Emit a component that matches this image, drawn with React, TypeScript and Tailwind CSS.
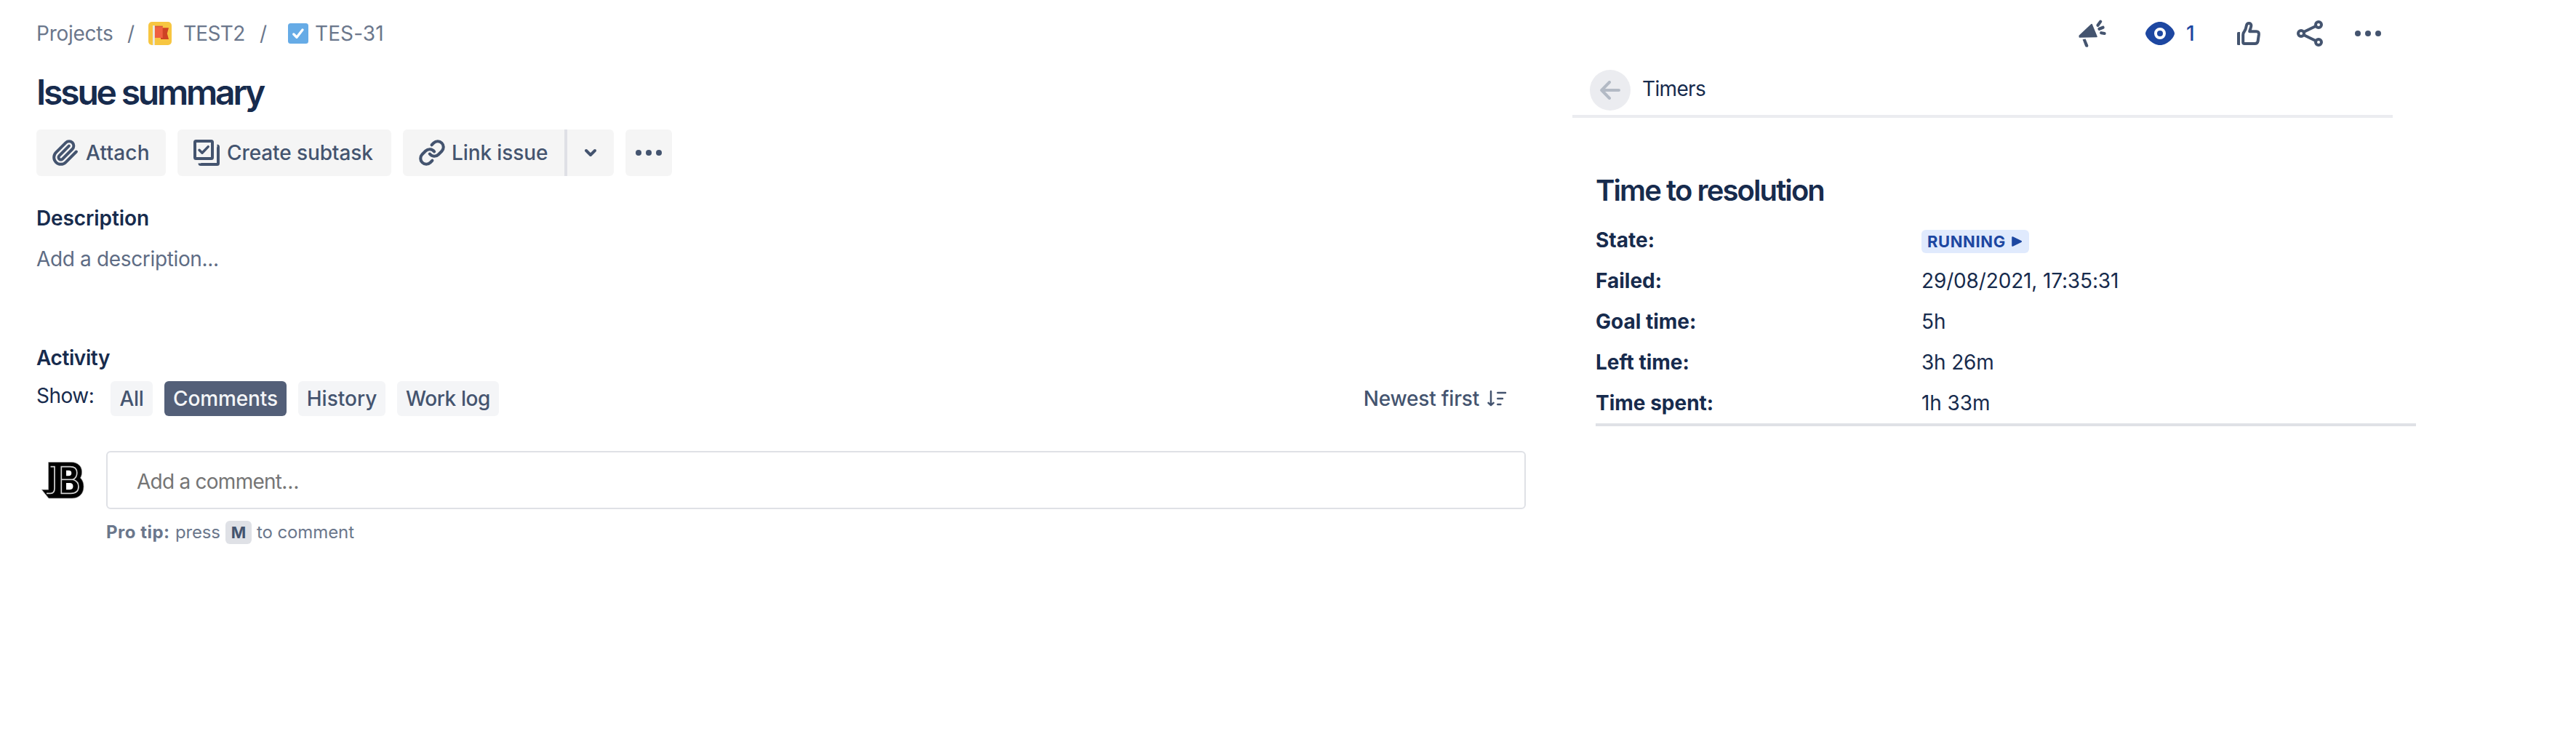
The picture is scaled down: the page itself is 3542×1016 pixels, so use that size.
import type { ReactNode } from "react";

function FlagIcon() {
  return (
    <svg viewBox="0 0 32 32" className="ml-[20px] h-8 w-8 shrink-0">
      <rect width="32" height="32" rx="5" fill="#f7c641" />
      <path d="M17 8.3H28L25.8 16L28 24H17Z" fill="#ce4324" />
      <rect x="8.7" y="6" width="11" height="16" fill="#ef6040" />
      <rect x="8.7" y="5.6" width="11" height="1.6" fill="#d3573a" />
      <rect x="6" y="5" width="2.8" height="27" fill="#e9ebe6" />
    </svg>
  );
}

function TaskIcon() {
  return (
    <svg viewBox="0 0 28 28" className="ml-[30px] h-7 w-7 shrink-0">
      <rect width="28" height="28" rx="3.5" fill="#66abe6" />
      <path d="M7.8 15L12 19.3L20 9" fill="none" stroke="#fff" strokeWidth="3.4" strokeLinecap="round" strokeLinejoin="round" />
    </svg>
  );
}

function PaperclipIcon() {
  return (
    <svg viewBox="0 0 24 24" className="h-[38px] w-[38px] shrink-0" fill="none" stroke="currentColor" strokeWidth="2.5" strokeLinecap="round">
      <path d="m21.44 11.05-9.19 9.19a6 6 0 0 1-8.49-8.49l8.57-8.57A4 4 0 1 1 18 8.84l-8.59 8.57a2 2 0 0 1-2.83-2.83l8.49-8.48" />
    </svg>
  );
}

function SubtaskIcon() {
  return (
    <svg viewBox="0 0 36 36" className="h-9 w-9 shrink-0" fill="none" stroke="currentColor" strokeWidth="4">
      <rect x="2" y="2" width="24" height="24" rx="1.5" />
      <path d="M8 14.2L12 18.2L20.3 9.6" strokeWidth="3.4" strokeLinecap="round" strokeLinejoin="round" />
      <path d="M32.5 8.5Q34 8.5 34 10V32.5Q34 34 32.5 34H10Q8.5 34 8.5 32.5" />
    </svg>
  );
}

function LinkIcon() {
  return (
    <svg viewBox="0 0 24 24" className="h-[38px] w-[38px] shrink-0" fill="none" stroke="currentColor" strokeWidth="2.6" strokeLinecap="round">
      <path d="M10 13a5 5 0 0 0 7.54.54l3-3a5 5 0 0 0-7.07-7.07l-1.72 1.71" />
      <path d="M14 11a5 5 0 0 0-7.54-.54l-3 3a5 5 0 0 0 7.07 7.07l1.71-1.71" />
    </svg>
  );
}

function DotsIcon() {
  return (
    <svg viewBox="0 0 40 8" className="h-2 w-10 shrink-0" fill="currentColor">
      <circle cx="6" cy="4" r="4" />
      <circle cx="20" cy="4" r="4" />
      <circle cx="34" cy="4" r="4" />
    </svg>
  );
}

function SortIcon() {
  return (
    <svg viewBox="0 0 28 24" className="h-6 w-7 shrink-0" fill="none" stroke="currentColor" strokeWidth="2.5" strokeLinecap="round" strokeLinejoin="round">
      <path d="M6 2V21M2.5 17.8L6 21.2L9.6 17.8" />
      <path d="M15.3 4H26M15.3 12H22M15.3 20H19.4" />
    </svg>
  );
}

function MegaphoneIcon() {
  return (
    <svg viewBox="0 0 44 44" className="h-11 w-11 shrink-0" fill="none" stroke="currentColor" strokeWidth="4.2" strokeLinecap="round">
      <path d="M5.5 25.2L22 9.8L28.8 26.3L5.5 26.7Z" fill="currentColor" strokeWidth="2" strokeLinejoin="round" />
      <path d="M9.6 30.2L13.6 29.6L17.3 38.2Q17.6 40.8 15.3 40.8Q13.6 40.8 13 39.2Z" fill="currentColor" stroke="none" />
      <path d="M30.5 10.8L34.2 5.6M32.5 15.8L37.6 13.7M35.2 21.2L39.6 22" />
    </svg>
  );
}

function EyeIcon() {
  return (
    <svg viewBox="0 0 40 32" className="h-8 w-10 shrink-0">
      <path d="M20 0C30.5 0 40 11 40 16S30.5 32 20 32S0 21 0 16S9.5 0 20 0Z" fill="#1d47a1" />
      <circle cx="20" cy="16" r="6" fill="none" stroke="#fff" strokeWidth="4" />
    </svg>
  );
}

function ThumbIcon() {
  return (
    <svg viewBox="0 0 36 36" className="h-9 w-9 shrink-0" fill="none" stroke="currentColor" strokeWidth="4" strokeLinejoin="round">
      <path d="M6 34H3.5Q2 34 2 32.5V17.5Q2 16 3.5 16H6Z" fill="currentColor" stroke="none" />
      <path d="M10.2 20V30Q10.2 32 12.2 32H26.5Q30 32 30.6 28.6L31.9 19.5Q32.3 15.2 28.5 15.2H19.2C19.8 12.5 21.4 9.5 21.4 7C21.4 2.8 15.6 3 14.9 7C14 13 13 14 11.3 16.3Q10.2 17.8 10.2 20Z" />
    </svg>
  );
}

function ShareIcon() {
  return (
    <svg viewBox="0 0 40 40" className="h-10 w-10 shrink-0" fill="none" stroke="currentColor" strokeWidth="4">
      <path d="M11.5 18L28.5 9.8M11.5 22L28.5 30.2" />
      <circle cx="8" cy="20" r="4" />
      <circle cx="32" cy="8" r="4" />
      <circle cx="32" cy="32" r="4" />
    </svg>
  );
}

function Avatar() {
  return (
    <svg viewBox="0 0 60 56" className="mt-[13px] ml-[7px] h-14 w-[60px] shrink-0">
      <path d="M10 2.5H41C50 2.5 55.5 8 55.5 15.5C55.5 19 55 21.5 53.5 24C56.5 27 58 31 58 36C58 46 51.5 52 42 52H10L.5 40.3H9.7V2.5Z" fill="#000" stroke="#888" strokeWidth=".7" />
      <g fill="none" stroke="#d4d4d4" strokeWidth="1.7">
        <path d="M12.5 8.7H18V38.5Q18 45.3 12.5 45.3H7" />
        <path d="M27.3 8.7H39.5C46 8.7 48.8 12 48.8 17C48.8 21.5 47 24.5 43.5 26.3C48.5 28 51 31 51 36C51 42 47 45.3 40.5 45.3H27.3Z" />
        <path d="M27.3 26.3H44" />
      </g>
      <path d="M34 13.8H37.5Q41.3 13.8 41.3 17.5T37.5 21.3H34ZM34 31H39Q43.5 31 43.5 35.5T39 40.2H34Z" fill="#fff" />
    </svg>
  );
}

function Tab({ className, children }: { className: string; children: ReactNode }) {
  return <button className={`flex h-12 items-center justify-center rounded-[6px] font-medium whitespace-nowrap ${className}`}>{children}</button>;
}

function TimerRow({ label, children }: { label: string; children: ReactNode }) {
  return (
    <div className="flex h-14 items-center">
      <dt className="w-[448px] font-bold">{label}</dt>
      <dd>{children}</dd>
    </div>
  );
}

function IssueColumn() {
  return (
    <main className="w-[2048px] shrink-0">
      <nav className="flex h-8 items-center text-[#6b778c]">
        <span className="w-[125px] tracking-[-0.25px]">Projects</span>
        <span className="w-[9px]">/</span>
        <FlagIcon />
        <span className="ml-[16px] w-[105px] tracking-[-0.7px]">TEST2</span>
        <span className="w-[9px]">/</span>
        <TaskIcon />
        <span className="ml-[9px] tracking-[0.1px]">TES-31</span>
      </nav>
      <h1 className="mt-[37px] text-[48px] leading-[56px] font-semibold tracking-[-3.2px]">Issue summary</h1>

      <div className="mt-[23px] flex h-16 font-medium text-[#44546f]">
        <button className="flex w-[178px] items-center rounded-[6px] bg-[#f5f5f5] pl-[21px]">
          <PaperclipIcon />
          <span className="ml-[9px] tracking-[0.2px]">Attach</span>
        </button>
        <button className="ml-4 flex w-[294px] items-center rounded-[6px] bg-[#f5f5f5] pl-[22px]">
          <SubtaskIcon />
          <span className="ml-[10px] tracking-[-0.1px] whitespace-nowrap">Create subtask</span>
        </button>
        <button className="ml-4 flex w-[222px] items-center rounded-l-[6px] bg-[#f5f5f5] pl-[21px]">
          <LinkIcon />
          <span className="ml-[8px] tracking-[-0.1px]">Link issue</span>
        </button>
        <button className="flex w-[68px] items-center justify-center rounded-r-[6px] border-l-4 border-[#dfe0e6] bg-[#f5f5f5]">
          <svg viewBox="0 0 20 14" className="h-[14px] w-5" fill="none" stroke="currentColor" strokeWidth="4" strokeLinecap="round" strokeLinejoin="round">
            <path d="M4 4L10 10L16 4" />
          </svg>
        </button>
        <button className="ml-4 flex w-16 items-center justify-center rounded-[6px] bg-[#f5f5f5]">
          <DotsIcon />
        </button>
      </div>

      <h2 className="mt-[38px] leading-10 font-semibold tracking-[-0.1px]">Description</h2>
      <p className="mt-4 leading-10 tracking-[-0.35px] text-[#5e6c84]">Add a description...</p>

      <h2 className="mt-24 leading-10 font-semibold tracking-[-0.4px]">Activity</h2>
      <div className="mt-3 flex h-12 items-center text-[#44546f]">
        <span className="mb-2 w-[102px] tracking-[-0.5px] text-[#172b4d]">Show:</span>
        <Tab className="w-[58px] bg-[#f4f5f7] tracking-[-0.4px]">All</Tab>
        <Tab className="ml-4 w-[168px] bg-[#535f78] tracking-[-0.1px] text-[#f4f5f7]">Comments</Tab>
        <Tab className="ml-4 w-[120px] bg-[#f4f5f7]">History</Tab>
        <Tab className="ml-4 w-[140px] bg-[#f4f5f7] tracking-[-0.4px]">Work log</Tab>
        <button className="mr-[26px] ml-auto flex items-center font-medium tracking-[-0.2px]">
          <span className="mr-[10px]">Newest first</span>
          <SortIcon />
        </button>
      </div>

      <div className="mt-12 flex">
        <div className="w-24 shrink-0">
          <Avatar />
        </div>
        <div className="grow">
          <div className="flex h-20 items-center rounded-[6px] border-2 border-[#dfe1e6] pt-1 pl-10 tracking-[-0.75px] text-[#757575]">Add a comment…</div>
          <p className="mt-4 flex h-8 items-center text-[24px] text-[#6b778c]">
            <b className="w-[95px] font-bold tracking-[0.5px]">Pro tip:</b>
            <span className="w-[69px] tracking-[-0.2px]">press</span>
            <kbd className="flex h-8 w-9 items-center justify-center rounded-[6px] bg-[#dfe1e6] font-['Inter'] text-[22px] font-bold text-[#44546f]">M</kbd>
            <span className="ml-[7px] tracking-[-0.1px]">to comment</span>
          </p>
        </div>
      </div>
    </main>
  );
}

function TimersColumn() {
  return (
    <aside className="ml-16 w-[1160px] shrink-0">
      <div className="flex h-8 items-center pl-[692px] text-[#44546f]">
        <MegaphoneIcon />
        <div className="ml-[52px] flex items-center">
          <EyeIcon />
          <span className="ml-4 w-4 font-medium text-[#1d47a1]">1</span>
        </div>
        <div className="ml-[52px]">
          <ThumbIcon />
        </div>
        <div className="ml-[46px]">
          <ShareIcon />
        </div>
        <div className="ml-10">
          <DotsIcon />
        </div>
      </div>

      <header className="mt-[34px] flex w-[1128px] items-center border-b-4 border-[#ebecf0] pb-[6px] pl-6">
        <button className="flex h-14 w-14 items-center justify-center rounded-full bg-[#ebecf0]">
          <svg viewBox="0 0 28 26" className="h-[26px] w-7" fill="none" stroke="#b3bac5" strokeWidth="4" strokeLinecap="round" strokeLinejoin="round">
            <path d="M26 13H3M13 2L2.2 13L13 24" />
          </svg>
        </button>
        <span className="mb-1 ml-4 tracking-[-0.65px]">Timers</span>
      </header>

      <section className="mt-[76px] ml-8 border-b-4 border-[#dfe1e6]">
        <h2 className="text-[40px] leading-[48px] font-semibold tracking-[-1.9px]">Time to resolution</h2>
        <dl className="mt-4">
          <TimerRow label="State:">
            <span className="mt-1 flex h-8 w-[148px] items-center rounded-[6px] bg-[#e0eafd] pl-2 text-[22px] font-bold tracking-[0.6px] text-[#1d47a1]">
              RUNNING
              <svg viewBox="0 0 16 16" className="ml-[7px] h-4 w-4" fill="currentColor" stroke="currentColor" strokeWidth="2" strokeLinejoin="round">
                <path d="M2.2 2.2L14 8L2.2 13.8Z" />
              </svg>
            </span>
          </TimerRow>
          <TimerRow label="Failed:">
            <span className="tracking-[-0.15px]">29/08/2021, 17:35:31</span>
          </TimerRow>
          <TimerRow label="Goal time:">5h</TimerRow>
          <TimerRow label="Left time:">
            <span className="tracking-[-0.2px]">3h 26m</span>
          </TimerRow>
          <TimerRow label="Time spent:">
            <span className="tracking-[-0.1px]">1h 33m</span>
          </TimerRow>
        </dl>
      </section>
    </aside>
  );
}

export default function App() {
  return (
    <div className="flex min-h-screen w-full overflow-hidden bg-white pt-[30px] pl-[50px] font-['Inter',sans-serif] text-[28px] text-[#172b4d]">
      <IssueColumn />
      <TimersColumn />
    </div>
  );
}
